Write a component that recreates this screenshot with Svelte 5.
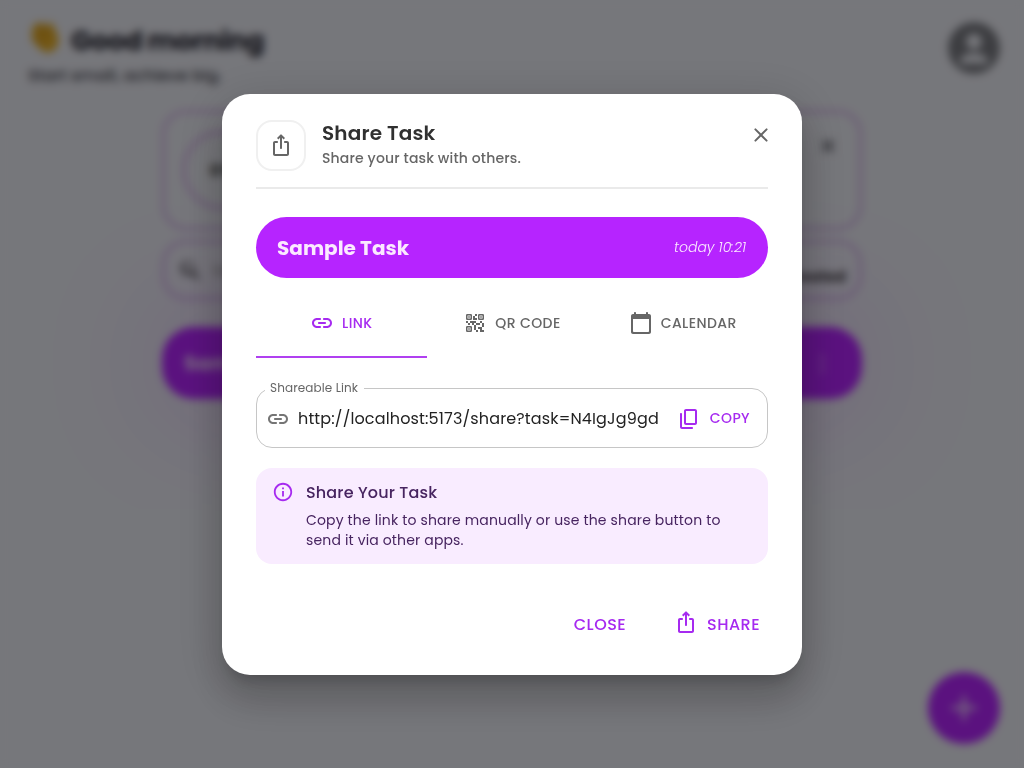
<script>
  const icons = {
    share:
      'm16 5-1.42 1.42-1.59-1.59V15.1c0 .55-.45 1-1 1s-.98-.45-.98-1V4.83L9.42 6.42 8 5l3.3-3.3a1 1 0 0 1 1.4 0L16 5zm4 5v11c0 1.1-.9 2-2 2H6c-1.11 0-2-.9-2-2V10c0-1.11.89-2 2-2h2c.55 0 1 .45 1 1s-.45 1-1 1H6v11h12V10h-2c-.55 0-1-.45-1-1s.45-1 1-1h2c1.1 0 2 .89 2 2z',
    link:
      'M17 7h-3c-.55 0-1 .45-1 1s.45 1 1 1h3c1.65 0 3 1.35 3 3s-1.35 3-3 3h-3c-.55 0-1 .45-1 1s.45 1 1 1h3c2.76 0 5-2.24 5-5s-2.24-5-5-5zm-9 5c0 .55.45 1 1 1h6c.55 0 1-.45 1-1s-.45-1-1-1H9c-.55 0-1 .45-1 1zm2 3H7c-1.65 0-3-1.35-3-3s1.35-3 3-3h3c.55 0 1-.45 1-1s-.45-1-1-1H7c-2.76 0-5 2.24-5 5s2.24 5 5 5h3c.55 0 1-.45 1-1s-.45-1-1-1z',
    calendar:
      'M20 3h-1V2c0-.55-.45-1-1-1s-1 .45-1 1v1H7V2c0-.55-.45-1-1-1s-1 .45-1 1v1H4c-1.1 0-2 .9-2 2v16c0 1.1.9 2 2 2h16c1.1 0 2-.9 2-2V5c0-1.1-.9-2-2-2zm-1 18H5c-.55 0-1-.45-1-1V8h16v12c0 .55-.45 1-1 1z',
    copy: 'M15 20H5V7c0-.55-.45-1-1-1s-1 .45-1 1v13c0 1.1.9 2 2 2h10c.55 0 1-.45 1-1s-.45-1-1-1zm5-4V4c0-1.1-.9-2-2-2H9c-1.1 0-2 .9-2 2v12c0 1.1.9 2 2 2h9c1.1 0 2-.9 2-2zm-2 0H9V4h9v12z',
    close:
      'M18.3 5.71a.996.996 0 0 0-1.41 0L12 10.59 7.11 5.7A.996.996 0 1 0 5.7 7.11L10.59 12 5.7 16.89a.996.996 0 1 0 1.41 1.41L12 13.41l4.89 4.89a.996.996 0 1 0 1.41-1.41L13.41 12l4.89-4.89c.38-.38.38-1.02 0-1.4z',
    info: 'M11 7h2v2h-2zm0 4h2v6h-2zm1-9C6.48 2 2 6.48 2 12s4.48 10 10 10 10-4.48 10-10S17.52 2 12 2zm0 18c-4.41 0-8-3.59-8-8s3.59-8 8-8 8 3.59 8 8-3.59 8-8 8z',
    search:
      'M15.5 14h-.79l-.28-.27A6.5 6.5 0 1 0 13 15.3l.27.28v.79l4.9 4.9 1.5-1.5zM9.5 14a4.5 4.5 0 1 1 0-9 4.5 4.5 0 0 1 0 9z',
    person:
      'M12 2C6.48 2 2 6.48 2 12s4.48 10 10 10 10-4.48 10-10S17.52 2 12 2zm0 4.500c1.700 0 3 1.300 3 3s-1.300 3-3 3-3-1.300-3-3 1.300-3 3-3zm-5.500 10.800c0-2 3.200-3.300 5.500-3.300s5.500 1.300 5.500 3.300v.7h-11z',
  };
  const tabs = [
    { icon: 'link', label: 'LINK' },
    { icon: 'qr', label: 'QR CODE' },
    { icon: 'calendar', label: 'CALENDAR' },
  ];
  let active = $state(0);
</script>

{#snippet icon(name, size = 24)}
  <svg width={size} height={size} viewBox="0 0 24 24" fill="currentColor" aria-hidden="true"><path d={icons[name]} /></svg>
{/snippet}

{#snippet qr()}
  <svg width="24" height="24" viewBox="0 0 24 24" fill="currentColor" aria-hidden="true">
    <g fill="none" stroke="currentColor" stroke-width="1.5">
      <rect x="3.75" y="3.75" width="4.5" height="4.5" rx=".5" />
      <rect x="15.75" y="3.75" width="4.5" height="4.5" rx=".5" />
      <rect x="3.75" y="15.75" width="4.5" height="4.500" rx=".5" />
    </g>
    <path d="M5.250 5.250h1.500v1.500h-1.500zM17.250 5.250h1.500v1.500h-1.500zM5.250 17.250h1.500v1.500h-1.500z" />
    <path
      d="M15 21h-2v-2h2v2zm-2-7h-2v5h2v-5zm8-2h-2v4h2v-4zm-2-2h-2v2h2v-2zM7 12H5v2h2v-2zm-2-2H3v2h2v-2zm7-5h2V3h-2v2zm7 14v-3h-4v2h2v3h4v-2h-2zm-2-7h-4v2h4v-2zm-4-2H7v2h2v2h2v-2h2v-2zm1-1V7h-2V5h-2v4h4z"
    />
  </svg>
{/snippet}

<div class="screen">
  <div class="home">
    <header>
      <div>
        <h1>
          <svg width="34" height="36" viewBox="0 0 34 36" aria-hidden="true">
            <path d="M3 12 9 5l4-1 5 6 1-4 4-2 5 9 3 9-3 9-8 4-7-3L3 21l2-4z" fill="#e8b02a" />
            <path d="m9 9 10 12M14 6l9 12M6 17l9 10" stroke="#c98a16" stroke-width="2" />
          </svg>
          <span>Good morning</span>
        </h1>
        <p>Start small, achieve big.</p>
      </div>
      <div class="avatar">{@render icon('person', 62)}</div>
    </header>
    <main>
      <section class="progress">
        <div class="ring">0%</div>
        <div class="dismiss">{@render icon('close', 22)}</div>
      </section>
      <section class="search">
        {@render icon('search', 26)}
        <span>Search for task...</span>
        <b>Date Created</b>
      </section>
      <section class="task"><b>Sample Task</b><span>⋮</span></section>
    </main>
    <div class="fab">
      <svg width="36" height="36" viewBox="0 0 24 24"><path d="M12 4.5v15M4.5 12h15" stroke="#f0dcff" stroke-width="2.2" stroke-linecap="round" /></svg>
    </div>
  </div>

  <div class="backdrop">
    <div class="dialog" role="dialog" aria-label="Share Task">
      <div class="head">
        <div class="badge">{@render icon('share')}</div>
        <div class="titles">
          <h2>Share Task</h2>
          <p>Share your task with others.</p>
        </div>
        <button class="x" aria-label="Close">{@render icon('close')}</button>
      </div>

      <div class="banner"><strong>Sample Task</strong><em>today 10:21</em></div>

      <div class="tabs">
        {#each tabs as tab, i}
          <button class="tab" class:active={active === i} onclick={() => (active = i)}>
            {#if tab.icon === 'qr'}{@render qr()}{:else}{@render icon(tab.icon)}{/if}<span>{tab.label}</span>
          </button>
        {/each}
      </div>

      <fieldset>
        <legend>Shareable Link</legend>
        <span class="chain">{@render icon('link')}</span>
        <span class="url">http://localhost:5173/share?task=N4IgJg9gd</span>
        <button class="copy">{@render icon('copy')}<span>COPY</span></button>
      </fieldset>

      <div class="alert">
        {@render icon('info', 22)}
        <div>
          <h3>Share Your Task</h3>
          <p>Copy the link to share manually or use the share button to send it via other apps.</p>
        </div>
      </div>

      <div class="actions">
        <button class="b-close"><span>CLOSE</span></button>
        <button class="b-share">{@render icon('share')}<span>SHARE</span></button>
      </div>
    </div>
  </div>
</div>

<style>
  :global(body) { overflow: hidden; }
  * { box-sizing: border-box; margin: 0; }
  .screen {
    position: relative;
    width: 1024px;
    height: 768px;
    overflow: hidden;
    font-family: Poppins, Inter, sans-serif;
    font-feature-settings: 'cv11';
  }
  svg { display: block; flex: none; }
  span, strong, em, b { white-space: nowrap; }
  button { border: 0; background: none; padding: 0; font: inherit; font-feature-settings: inherit; letter-spacing: 0.02857em; color: inherit; display: flex; align-items: center; }

  .home { width: 1024px; height: 768px; background: #edeef6; color: #22222e; }
  header { display: flex; justify-content: space-between; height: 110px; padding: 17px 19px 0 28px; }
  h1 { display: flex; align-items: center; gap: 9px; font-size: 27px; line-height: 44px; font-weight: 700; letter-spacing: -0.5px; height: 40px; }
  h1 svg { margin-top: -3px; }
  h1 span { padding-top: 7px; }
  header p { margin-top: 7px; font-size: 16px; line-height: 24px; font-weight: 500; letter-spacing: 0.05px; color: #44444e; }
  .avatar { color: #7a7b82; }
  main { width: 700px; margin: 0 auto; display: flex; flex-direction: column; }
  main section { display: flex; border: 3px solid #d2aeea; border-radius: 24px; }
  .progress { height: 120px; padding: 17px; justify-content: space-between; }
  .ring { width: 80px; height: 80px; border: 4px solid #d9b8ee; border-radius: 50%; display: grid; place-items: center; font-weight: 700; color: #444; }
  .dismiss { margin: 5px 3px; }
  .search { height: 60px; margin-top: 10px; padding: 0 13px; align-items: center; gap: 8px; color: #444; }
  .search span { color: #999; }
  .search b { margin-left: auto; font-size: 15px; padding-top: 12px; }
  main .task { height: 72px; margin-top: 27px; padding: 0 22px; border: 0; border-radius: 32px; align-items: center; justify-content: space-between; background: #b624ff; color: #f3dcff; font-size: 20px; box-shadow: 0 0 128px -10px #b624ff66; }
  .task span { padding-right: 8px; font-weight: 700; }
  .fab { position: absolute; left: 928px; top: 672px; width: 72px; height: 72px; border-radius: 50%; background: #b624ff; display: grid; place-items: center; }

  .backdrop { position: absolute; inset: 0; display: grid; place-items: center; background: rgba(0, 0, 0, 0.5); backdrop-filter: blur(4px); }
  .dialog {
    width: 580px;
    height: 581px;
    padding: 26px 34px 0;
    border-radius: 28px;
    background: #fff;
    box-shadow: 0 11px 15px -7px rgba(0, 0, 0, 0.2), 0 24px 38px 3px rgba(0, 0, 0, 0.14), 0 9px 46px 8px rgba(0, 0, 0, 0.12);
    color: #666;
  }
  .head { display: flex; height: 69px; border-bottom: 2px solid #eaeaea; }
  .badge { width: 50px; height: 51px; border: 2px solid #f0f0f0; border-radius: 16px; display: grid; place-items: center; }
  .titles { margin-left: 16px; flex: 1; }
  h2 { font-size: 20px; line-height: 26px; font-weight: 600; color: #303030; letter-spacing: 0.0075em; }
  .titles p { font-size: 14px; line-height: 24px; font-weight: 500; letter-spacing: 0.01071em; }
  .x { width: 24px; height: 24px; margin: 3px -5px 0 0; }
  .banner { display: flex; align-items: center; justify-content: space-between; height: 61px; margin-top: 28px; padding: 1px 22px 0 21px; border-radius: 31px; background: #b624ff; color: #fbe9ff; }
  .banner strong { font-size: 20px; font-weight: 700; letter-spacing: 0; }
  .banner em { font-size: 14px; font-weight: 300; }
  .tabs { display: grid; grid-template-columns: repeat(3, 1fr); margin-top: 10px; height: 70px; }
  .tab { justify-content: center; gap: 8px; padding-top: 2px; font-size: 14px; font-weight: 500; border-bottom: 2px solid transparent; }
  .tab span { padding-top: 1px; }
  .tab.active { color: #a62af0; border-color: #b040f0; }
  fieldset { display: flex; align-items: center; height: 67px; margin: 23px 0 0; padding: 0 17px 6px 9px; border: 1px solid #c6c6c6; border-radius: 16px; min-width: 0; }
  legend { margin-left: -1px; padding: 0 6px 2px 5px; font-size: 12px; line-height: 14px; letter-spacing: 0.00938em; }
  .chain { margin-right: 8px; color: #757575; }
  .url { font-size: 16px; color: #222; letter-spacing: 0.00938em; }
  .copy { margin-left: auto; gap: 9px; font-size: 14px; font-weight: 500; color: #a62af0; }
  .alert { display: flex; gap: 12px; height: 96px; margin-top: 20px; padding: 13px 16px; border-radius: 16px; background: #f9ecff; color: #a62af0; }
  .alert div { color: #472460; }
  h3 { margin-top: 1px; font-size: 16px; line-height: 22px; font-weight: 500; letter-spacing: 0.00938em; }
  .alert p { margin-top: 6px; font-size: 14px; line-height: 20px; letter-spacing: 0.01071em; }
  .actions { display: flex; justify-content: flex-end; gap: 48px; margin-top: 47px; padding-right: 8px; height: 26px; color: #a62af0; font-size: 16px; font-weight: 500; }
  .b-share { gap: 9px; }
  .b-share svg { margin-top: -3px; }
  .actions span { padding-top: 2px; }
</style>
